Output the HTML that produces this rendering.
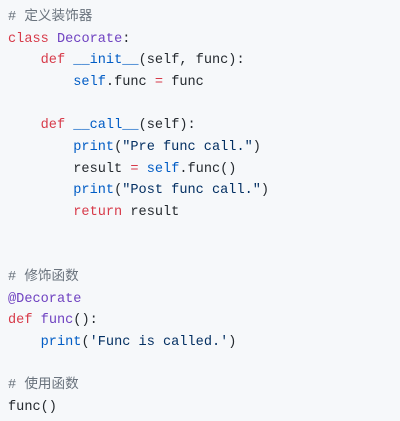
<!DOCTYPE html>
<html><head><meta charset="utf-8"><style>
html,body{margin:0;padding:0;background:#f6f8fa;width:400px;height:421px;overflow:hidden}
pre{margin:0;padding:7px 8px 0;font-family:"Liberation Mono","Noto Sans CJK SC",monospace;font-size:13.6px;line-height:21.66px;color:#24292e;white-space:pre}
.c{color:#6a737d}.k{color:#d73a49}.n{color:#6f42c1}.b{color:#005cc5}.s{color:#032f62}
</style></head><body><pre><span class="c"># 定义装饰器</span>
<span class="k">class</span> <span class="n">Decorate</span>:
    <span class="k">def</span> <span class="b">__init__</span>(self, func):
        <span class="b">self</span>.func <span class="k">=</span> func

    <span class="k">def</span> <span class="b">__call__</span>(self):
        <span class="b">print</span>(<span class="s">"Pre func call."</span>)
        result <span class="k">=</span> <span class="b">self</span>.func()
        <span class="b">print</span>(<span class="s">"Post func call."</span>)
        <span class="k">return</span> result


<span class="c"># 修饰函数</span>
<span class="n">@Decorate</span>
<span class="k">def</span> <span class="n">func</span>():
    <span class="b">print</span>(<span class="s">'Func is called.'</span>)

<span class="c"># 使用函数</span>
func()</pre></body></html>
